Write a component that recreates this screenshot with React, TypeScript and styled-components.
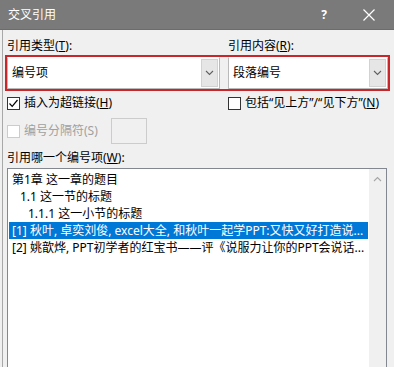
import React from 'react';
import styled, { createGlobalStyle } from 'styled-components';

const GlobalStyle = createGlobalStyle`
  html, body {
    margin: 0;
    padding: 0;
    background: #f0f0f0;
  }
  body {
    font-family: "Noto Sans", "Noto Sans CJK SC", sans-serif;
    font-size: 12px;
    color: #000;
  }
`;

const Dialog = styled.div`
  width: 394px;
  height: 367px;
  overflow: hidden;
  display: flex;
  flex-direction: column;
  background: #f0f0f0;
`;

const TitleBar = styled.div`
  flex: 0 0 30px;
  display: flex;
  align-items: center;
  padding-left: 8px;
  background: #7a7a7a;
  color: #fff;
  box-sizing: border-box;
  border-bottom: 1px solid #6c6c6c;
`;

const Title = styled.span`
  line-height: 16px;
`;

const HelpButton = styled.span`
  margin-left: auto;
  margin-right: 36px;
  font-weight: 700;
  font-size: 12px;
  line-height: 16px;
`;

const CloseButton = styled.span`
  display: flex;
  margin-right: 19px;
`;

const Body = styled.div`
  flex: 1;
  min-height: 0;
  display: flex;
  flex-direction: column;
  padding: 8px 6px 0 4px;
  margin-left: 2px;
  border-left: 1px solid #a8a8a8;
`;

const Columns = styled.div`
  display: grid;
  grid-template-columns: 213px 1fr;
  column-gap: 8px;
`;

const Label = styled.div<{ $disabled?: boolean }>`
  line-height: 16px;
  height: 16px;
  white-space: nowrap;
  color: ${(p) => (p.$disabled ? '#a0a0a0' : '#000')};
`;

const Highlight = styled(Columns)`
  margin: 1px -2px 0;
  border: 2px solid #c9262c;
`;

const Combo = styled.div`
  height: 32px;
  box-sizing: border-box;
  display: flex;
  align-items: center;
  background: #fff;
  border: 1px solid #b9b9b9;
  border-top-color: #fff;
  padding: 0 1px 0 4px;
`;

const ComboText = styled.span`
  flex: 1;
  line-height: 16px;
`;

const ArrowButton = styled.span`
  width: 17px;
  height: 28px;
  box-sizing: border-box;
  display: flex;
  align-items: center;
  justify-content: center;
  background: #e6e6e6;
  border: 1px solid #d2d2d2;
`;

const OptionRow = styled(Columns)`
  margin-top: 4px;
  align-items: center;
`;

const CheckLine = styled.label<{ $width?: number }>`
  display: flex;
  align-items: center;
  gap: 4px;
  width: ${(p) => (p.$width ? `${p.$width}px` : 'auto')};
`;

const Box = styled.span<{ $disabled?: boolean }>`
  width: 13px;
  height: 13px;
  box-sizing: border-box;
  display: flex;
  align-items: center;
  justify-content: center;
  background: #fff;
  border: 1px solid ${(p) => (p.$disabled ? '#cccccc' : '#333333')};
`;

const SeparatorRow = styled.div`
  display: flex;
  align-items: center;
  margin-top: 7px;
  height: 26px;
`;

const SeparatorInput = styled.span`
  width: 36px;
  height: 26px;
  box-sizing: border-box;
  border: 1px solid #cccccc;
  background: #f0f0f0;
`;

const ListLabel = styled(Label)`
  margin-top: 6px;
`;

const ListBox = styled.div`
  margin-top: 2px;
  width: 380px;
  height: 222px;
  flex-shrink: 0;
  box-sizing: border-box;
  display: flex;
  background: #fff;
  border: 1px solid #828790;
`;

const Items = styled.div`
  flex: 1;
  padding: 2px 1px 0;
`;

const Item = styled.div<{ $indent: number; $selected?: boolean }>`
  height: 17px;
  line-height: 17px;
  white-space: nowrap;
  overflow: hidden;
  padding-left: ${(p) => 3 + p.$indent}px;
  background: ${(p) => (p.$selected ? '#0078d7' : 'transparent')};
  color: ${(p) => (p.$selected ? '#fff' : '#000')};
`;

const ScrollBar = styled.div`
  width: 17px;
  display: flex;
  flex-direction: column;
  background: #f0f0f0;
`;

const ScrollButton = styled.span`
  height: 20px;
  display: flex;
  align-items: center;
  justify-content: center;
`;

const Chevron = ({ up = false, color = '#606060' }: { up?: boolean; color?: string }) => (
  <svg width="9" height="6" viewBox="0 0 9 6">
    <path
      d={up ? 'M1 5 L4.5 1.5 L8 5' : 'M1 1 L4.5 4.5 L8 1'}
      fill="none"
      stroke={color}
      strokeWidth="1.1"
    />
  </svg>
);

const items = [
  { text: '第1章 这一章的题目', indent: 0 },
  { text: '1.1 这一节的标题', indent: 8 },
  { text: '1.1.1 这一小节的标题', indent: 16 },
  { text: '[1] 秋叶, 卓奕刘俊, excel大全, 和秋叶一起学PPT:又快又好打造说...', indent: 0, selected: true },
  { text: '[2] 姚歆烨, PPT初学者的红宝书——评《说服力让你的PPT会说话...', indent: 0 },
];

export default function App() {
  return (
    <Dialog>
      <GlobalStyle />
      <TitleBar>
        <Title>交叉引用</Title>
        <HelpButton>?</HelpButton>
        <CloseButton>
          <svg width="12" height="12" viewBox="0 0 12 12">
            <path d="M0.5 0.5 L11.5 11.5 M11.5 0.5 L0.5 11.5" stroke="#fff" strokeWidth="1.2" />
          </svg>
        </CloseButton>
      </TitleBar>
      <Body>
        <Columns>
          <Label>
            引用类型(<u>T</u>):
          </Label>
          <Label>
            引用内容(<u>R</u>):
          </Label>
        </Columns>
        <Highlight>
          <Combo>
            <ComboText>编号项</ComboText>
            <ArrowButton>
              <Chevron />
            </ArrowButton>
          </Combo>
          <Combo>
            <ComboText>段落编号</ComboText>
            <ArrowButton>
              <Chevron />
            </ArrowButton>
          </Combo>
        </Highlight>
        <OptionRow>
          <CheckLine>
            <Box>
              <svg width="11" height="11" viewBox="0 0 11 11">
                <path d="M1.5 5.5 L4.2 8.3 L9.5 2" fill="none" stroke="#000" strokeWidth="1.2" />
              </svg>
            </Box>
            <Label>
              插入为超链接(<u>H</u>)
            </Label>
          </CheckLine>
          <CheckLine>
            <Box />
            <Label>
              包括“见上方”/“见下方”(<u>N</u>)
            </Label>
          </CheckLine>
        </OptionRow>
        <SeparatorRow>
          <CheckLine $width={104}>
            <Box $disabled />
            <Label $disabled>编号分隔符(S)</Label>
          </CheckLine>
          <SeparatorInput />
        </SeparatorRow>
        <ListLabel>
          引用哪一个编号项(<u>W</u>):
        </ListLabel>
        <ListBox>
          <Items>
            {items.map((it) => (
              <Item key={it.text} $indent={it.indent} $selected={it.selected}>
                {it.text}
              </Item>
            ))}
          </Items>
          <ScrollBar>
            <ScrollButton>
              <Chevron up color="#a6a6a6" />
            </ScrollButton>
          </ScrollBar>
        </ListBox>
      </Body>
    </Dialog>
  );
}
